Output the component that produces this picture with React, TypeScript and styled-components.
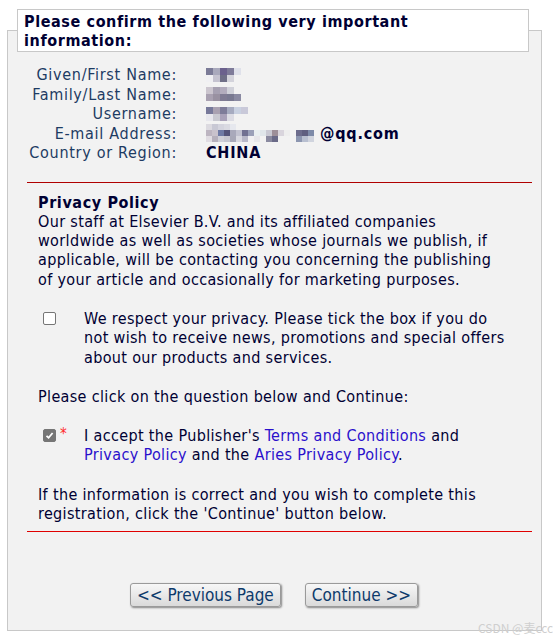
import React from "react"
import styled, { createGlobalStyle } from "styled-components"

const GlobalStyle = createGlobalStyle`
  html, body {
    margin: 0;
    padding: 0;
    background: #ffffff;
  }
  body {
    font-family: "DejaVu Sans Condensed", "DejaVu Sans", "Liberation Sans", sans-serif;
    font-size: 16px;
    line-height: 19.3px;
    letter-spacing: 0.35px;
    color: #000033;
  }
`

type Cells = string[][]

const T = "transparent"

const given: Cells = [
  ["#7b7b97", "#a9a9bc", "#6b618d", "#7e7b99", "#dfe1ea", T],
  ["#f0f0f3", "#c5c3d0", "#6f6f87", "#d3d3db", T, T],
]
const family: Cells = [
  ["#cbc5ce", "#a6a0b1", "#b2acbd", "#d0d1d9", T, T],
  ["#a9a1b1", "#9991a1", "#7f7b93", "#797991", "#8a8aa2", T],
]
const username: Cells = [
  ["#77799a", "#a9a1b1", "#7e7c99", "#a6abc0", "#c9d1e1", "#c9c9d9"],
  ["#e7e7ed", "#c9c9d1", "#a9a1b9", "#dcdce4", T, T],
]
const email: Cells = [
  ["#dcdae0", "#c8c8d4", "#d4d4de", "#dadae2", "#e6e8ee", T, T, T, T, T, T, T, T, T, T, T, T, T, T],
  ["#bdb5c1", "#c9c2cc", "#6f7aa5", "#54547a", "#a9a9bb", "#c2c2d0", "#717191", "#9aa0b8", "#e8eef0", "#e0e6ea", "#c9c9d3", "#9d8f99", "#d9d5dd", "#eeeeee", "#f2f2f2", "#6c6c8c", "#5f5f80", "#7d8aa8", "#f2f2f2"],
  ["#e0dce2", "#b6b0bc", "#cfcfd8", "#c6c6d0", "#a8a8b8", "#d8d8e0", "#b8b8c8", "#f0f0f2", "#e6e6ea", "#f2f2f2", "#8a8aa0", "#6a6a88", "#f2f2f2", "#f2f2f2", "#f2f2f2", "#8c96b0", "#b8bfd0", "#d0d4de", "#f2f2f2"],
]

function Mosaic({ cells, size = 7 }: { cells: Cells; size?: number }) {
  return (
    <MosaicGrid $cols={cells[0].length} $size={size}>
      {cells.flat().map((c, i) => (
        <MosaicCell key={i} $color={c} />
      ))}
    </MosaicGrid>
  )
}

export default function App() {
  return (
    <Page>
      <GlobalStyle />
      <Panel>
        <Legend>
          Please confirm the following very important
          <br />
          information:
        </Legend>

        <Details>
          <Label>Given/First Name:</Label>
          <Value>
            <Mosaic cells={given} />
          </Value>
          <Label>Family/Last Name:</Label>
          <Value>
            <Mosaic cells={family} />
          </Value>
          <Label>Username:</Label>
          <Value>
            <Mosaic cells={username} />
          </Value>
          <Label>E-mail Address:</Label>
          <Value>
            <Mosaic cells={email} size={6} />
            @qq.com
          </Value>
          <Label>Country or Region:</Label>
          <Value>CHINA</Value>
        </Details>

        <Rule $color="#b00000" $gap={19} />

        <Section>
          <Heading>Privacy Policy</Heading>
          <Paragraph>
            Our staff at Elsevier B.V. and its affiliated companies worldwide as well as societies whose
            journals we publish, if applicable, will be contacting you concerning the publishing of your
            article and occasionally for marketing purposes.
          </Paragraph>

          <OptionRow>
            <Marker>
              <Box />
            </Marker>
            <span>
              We respect your privacy. Please tick the box if you do not wish to receive news, promotions
              and special offers about our products and services.
            </span>
          </OptionRow>

          <Paragraph $top={20}>Please click on the question below and Continue:</Paragraph>

          <OptionRow>
            <Marker>
              <Box $checked>
                <svg width="9" height="9" viewBox="0 0 9 9">
                  <path d="M1.5 4.8 L3.6 6.8 L7.6 2" fill="none" stroke="#fff" strokeWidth="1.8" />
                </svg>
              </Box>
              <Star>*</Star>
            </Marker>
            <span>
              I accept the Publisher's <Link href="#">Terms and Conditions</Link> and{" "}
              <Link href="#">Privacy Policy</Link> and the <Link href="#">Aries Privacy Policy</Link>.
            </span>
          </OptionRow>

          <Paragraph $top={20}>
            If the information is correct and you wish to complete this registration, click the 'Continue'
            button below.
          </Paragraph>
        </Section>

        <Rule $color="#e00000" $gap={8} />

        <Actions>
          <Button type="button">&lt;&lt; Previous Page</Button>
          <Button type="button">Continue &gt;&gt;</Button>
        </Actions>
      </Panel>
      <Watermark>CSDN @麦cccc</Watermark>
    </Page>
  )
}

const Page = styled.div`
  position: relative;
  width: 553px;
  height: 640px;
  box-sizing: border-box;
  padding: 9px 11px 0 7px;
  overflow: hidden;
`

const Panel = styled.fieldset`
  margin: 0;
  min-width: 0;
  padding: 0 9px 23px 19px;
  border: 1px solid #c8c8c8;
  background: #f2f2f2;
`

const Legend = styled.legend`
  box-sizing: border-box;
  width: 512px;
  margin-left: -10px;
  padding: 2px 6px 1px;
  border: 1px solid #c8c8c8;
  background: #ffffff;
  font-weight: bold;
  letter-spacing: 0.6px;
  line-height: 19px;
  color: #000033;
  white-space: nowrap;
`

const Details = styled.div`
  display: grid;
  grid-template-columns: 150px auto;
  grid-auto-rows: 19.5px;
  column-gap: 29px;
  margin-top: 13px;
`

const Label = styled.div`
  text-align: right;
  letter-spacing: 0.7px;
  color: #1d3b63;
  white-space: nowrap;
`

const Value = styled.div`
  display: flex;
  align-items: center;
  font-weight: bold;
  letter-spacing: 0.8px;
  color: #000033;
`

const MosaicGrid = styled.span<{ $cols: number; $size: number }>`
  display: inline-grid;
  grid-template-columns: repeat(${(p) => p.$cols}, ${(p) => p.$size}px);
  grid-auto-rows: ${(p) => p.$size}px;
  filter: blur(0.5px);
`

const MosaicCell = styled.span<{ $color: string }>`
  background: ${(p) => p.$color};
`

const Rule = styled.hr<{ $color: string; $gap: number }>`
  height: 0;
  margin: ${(p) => p.$gap}px 0 0;
  border: none;
  border-top: 1px solid ${(p) => p.$color};
`

const Section = styled.div`
  padding: 10px 22px 0 11px;
`

const Heading = styled.div`
  font-weight: bold;
  letter-spacing: 0.6px;
`

const Paragraph = styled.div<{ $top?: number }>`
  margin-top: ${(p) => p.$top ?? 0}px;
`

const OptionRow = styled.div`
  display: grid;
  grid-template-columns: 41px 1fr;
  margin: 20px 0 0 5px;
`

const Marker = styled.div`
  display: flex;
  align-items: flex-start;
  gap: 4px;
  padding-top: 3px;
`

const Box = styled.span<{ $checked?: boolean }>`
  display: inline-flex;
  align-items: center;
  justify-content: center;
  box-sizing: border-box;
  width: 13px;
  height: 13px;
  border-radius: 2px;
  border: 1px solid #767676;
  background: ${(p) => (p.$checked ? "#767676" : "#ffffff")};
`

const Star = styled.span`
  color: #ff2a2a;
  font-size: 15px;
  line-height: 12px;
  margin-top: -1px;
`

const Link = styled.a`
  color: #2a10cc;
  text-decoration: none;
`

const Actions = styled.div`
  display: flex;
  justify-content: center;
  gap: 24px;
  margin: 51px 0 0 -11px;
`

const Button = styled.button`
  height: 24px;
  padding: 0 6px;
  border: 1px solid #9a9a9a;
  border-radius: 3px;
  background: linear-gradient(#f7f7f7, #dadada);
  box-shadow: 1px 1px 2px rgba(0, 0, 0, 0.45);
  font-family: inherit;
  font-size: 17px;
  line-height: 20px;
  color: #0d3a6b;
  cursor: pointer;
`

const Watermark = styled.div`
  position: absolute;
  left: 478px;
  top: 618px;
  font-family: "Noto Sans CJK SC", "DejaVu Sans", sans-serif;
  font-size: 12px;
  letter-spacing: 0;
  color: #cfcfcf;
  white-space: nowrap;
`
